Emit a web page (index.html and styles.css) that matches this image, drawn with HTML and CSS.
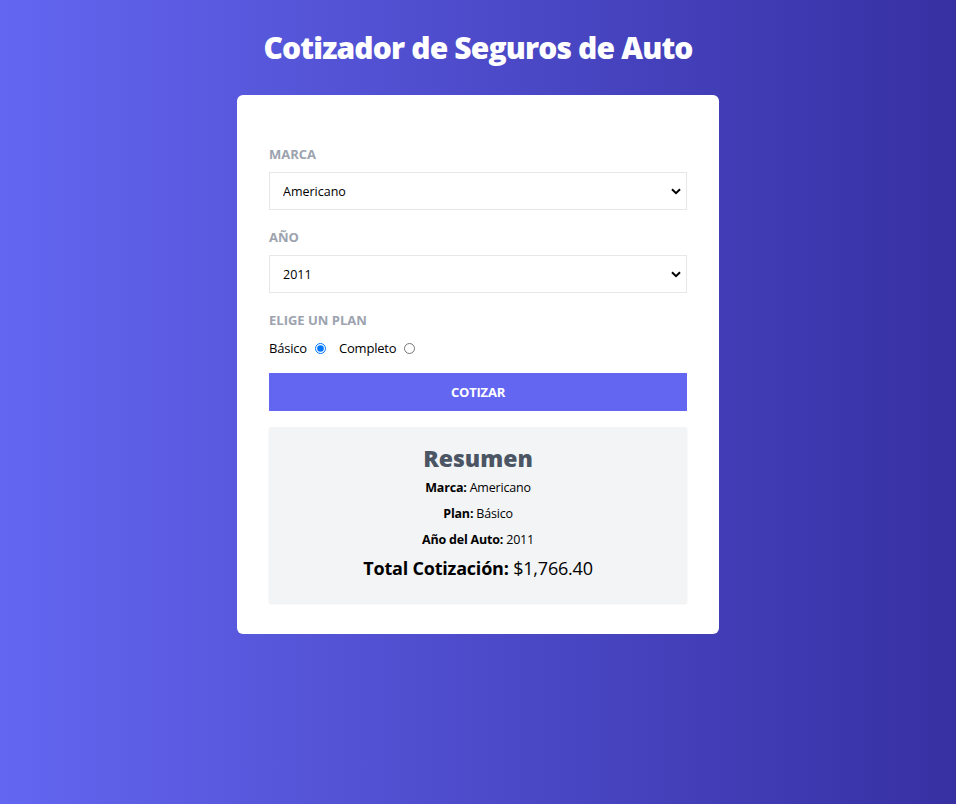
FILE: index.html
```html
<!DOCTYPE html>
<html lang="es">
<head>
<meta charset="utf-8">
<title>Cotizador de Seguros de Auto</title>
<link rel="stylesheet" href="styles.css">
</head>
<body>
<header class="header">
  <h1 class="title">Cotizador de Seguros de Auto</h1>
</header>
<main class="card">
  <form class="form">
    <div class="field">
      <label class="label">Marca</label>
      <div class="select-wrap">
        <select class="select">
          <option>Americano</option>
          <option>Europeo</option>
          <option>Asiático</option>
        </select>
        <svg class="chevron" width="10" height="7" viewBox="0 0 10 7"><path d="M1 1.2 L5 5.2 L9 1.2" fill="none" stroke="#000" stroke-width="2"/></svg>
      </div>
    </div>
    <div class="field">
      <label class="label">Año</label>
      <div class="select-wrap">
        <select class="select">
          <option>2011</option>
          <option>2012</option>
        </select>
        <svg class="chevron" width="10" height="7" viewBox="0 0 10 7"><path d="M1 1.2 L5 5.2 L9 1.2" fill="none" stroke="#000" stroke-width="2"/></svg>
      </div>
    </div>
    <div class="field">
      <label class="label">Elige un plan</label>
      <div class="radios">
        <label class="radio-label">Básico</label>
        <input class="radio" type="radio" name="plan" checked>
        <label class="radio-label">Completo</label>
        <input class="radio" type="radio" name="plan">
      </div>
    </div>
    <button class="button" type="button">Cotizar</button>
  </form>
  <section class="summary">
    <h2 class="summary-title">Resumen</h2>
    <p class="summary-line"><span class="b">Marca:</span> Americano</p>
    <p class="summary-line"><span class="b">Plan:</span> Básico</p>
    <p class="summary-line"><span class="b">Año del Auto:</span> 2011</p>
    <p class="summary-total"><span class="b">Total Cotización:</span> $1,766.40</p>
  </section>
</main>
</body>
</html>
```

FILE: styles.css
```css
* { box-sizing: border-box; }
html, body { height: 100%; }
body {
  margin: 0;
  font-family: "Open Sans", "Noto Sans", sans-serif;
  background: linear-gradient(to right, #6366f1, #3730a3);
  color: #000;
}
.header {
  padding-top: 30px;
  display: flex;
  justify-content: center;
}
.title {
  margin: 0;
  color: #fff;
  font-size: 30px;
  line-height: 36px;
  font-weight: 800;
  letter-spacing: -0.85px;
}
.card {
  width: 482px;
  margin: 29px auto 0;
  background: #fff;
  border-radius: 6px;
  padding: 32px 32px 31px;
}
.form { display: flex; flex-direction: column; }
.field { margin-top: 17px; }
.label {
  display: block;
  color: #9ca3af;
  font-weight: 700;
  text-transform: uppercase;
  font-size: 13px;
  line-height: 20px;
  margin-bottom: 8px;
}
.select-wrap { position: relative; }
.select {
  appearance: none;
  -webkit-appearance: none;
  width: 100%;
  height: 38px;
  border: 1px solid #e5e7eb;
  border-radius: 0;
  background: #fff;
  padding: 0 13px;
  font-family: inherit;
  font-size: 12.5px;
  color: #000;
}
.chevron {
  position: absolute;
  right: 6px;
  top: 16px;
}
.radios {
  display: flex;
  align-items: center;
  height: 20px;
  margin-top: 1px;
  font-size: 13px;
  letter-spacing: -0.2px;
}
.radio-label { margin-right: 5px; }
.radio { margin: 0 13px 0 3px; width: 11px; height: 11px; }
.button {
  margin-top: 15px;
  height: 38px;
  border: 0;
  background: #6366f1;
  color: #fff;
  font-family: inherit;
  font-weight: 700;
  font-size: 13px;
  letter-spacing: -0.2px;
  text-transform: uppercase;
}
.summary {
  margin-top: 16px;
  background: #f3f4f6;
  border-radius: 2px;
  box-shadow: 0 1px 2px rgba(0,0,0,0.08);
  text-align: center;
  padding: 14px 16px 20px;
}
.summary-title {
  margin: 0;
  color: #4b5563;
  font-size: 23px;
  line-height: 34px;
  font-weight: 800;
}
.summary-line {
  margin: 0;
  font-size: 12.5px;
  line-height: 26px;
  letter-spacing: -0.2px;
}
.summary-total {
  margin: 0;
  font-size: 18px;
  line-height: 30px;
  letter-spacing: -0.2px;
}
.b { font-weight: 700; }
```
